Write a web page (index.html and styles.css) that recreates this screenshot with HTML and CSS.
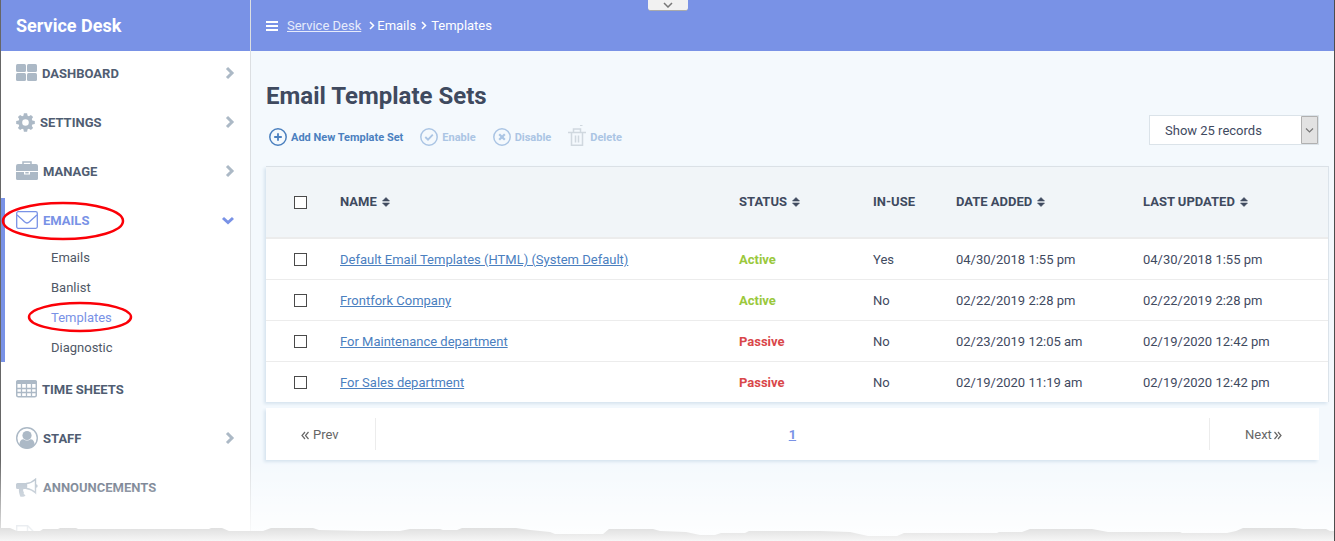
FILE: index.html
```html
<!DOCTYPE html>
<html lang="en">
<head>
<meta charset="utf-8">
<title>Service Desk - Email Template Sets</title>
<link rel="stylesheet" href="styles.css">
</head>
<body>
<svg class="defs" width="0" height="0" aria-hidden="true">
  <symbol id="chev" viewBox="0 0 10 14"><path d="M2 2l5 5-5 5" fill="none" stroke="currentColor" stroke-width="3"/></symbol>
  <symbol id="sort" viewBox="0 0 8 10"><path d="M4 .5l3.500 3.500h-7zM4 9.500l3.500-3.500h-7z" fill="currentColor" stroke="currentColor" stroke-width=".6" stroke-linejoin="round"/></symbol>
  <symbol id="crumb" viewBox="0 0 6 9"><path d="M1 1l3.5 3.5L1 8" fill="none" stroke="currentColor" stroke-width="1.5"/></symbol>
</svg>
<div class="app">
  <aside class="sidebar">
    <div class="brand">Service Desk</div>
    <nav class="menu" aria-label="Main">
      <a class="item" href="#"><svg width="21" height="18" viewBox="0 0 21 18"><g fill="currentColor"><rect width="10" height="8" rx="1.5"/><rect x="11" width="10" height="8" rx="1.5"/><rect y="9" width="10" height="8" rx="1.5"/><rect x="11" y="9" width="10" height="8" rx="1.5"/></g></svg><span>DASHBOARD</span><svg class="chev" width="10" height="14"><use href="#chev"/></svg></a>
      <a class="item" href="#"><svg width="19" height="19" viewBox="0 0 19 19"><path fill="currentColor" fill-rule="evenodd" d="M7.9.3h3.2l.5 2.4 1.3.5 2-1.3 2.2 2.2-1.3 2 .5 1.3 2.5.5v3.2l-2.5.5-.5 1.3 1.3 2-2.2 2.200-2-1.300-1.300.500-.500 2.500H7.900l-.500-2.500-1.300-.500-2 1.300-2.200-2.200 1.300-2-.500-1.300L.2 11.100V7.900l2.500-.500.500-1.300-1.300-2 2.200-2.200 2 1.300 1.300-.500zM9.500 6.200a3.300 3.300 0 1 0 0 6.600 3.300 3.300 0 0 0 0-6.600z"/></svg><span>SETTINGS</span><svg class="chev" width="10" height="14"><use href="#chev"/></svg></a>
      <a class="item" href="#"><svg width="22" height="20" viewBox="0 0 22 20"><path d="M7 4V1h8v3" fill="none" stroke="currentColor" stroke-width="1.500"/><path fill="currentColor" d="M2 3h18a2 2 0 0 1 2 2v5H0V5a2 2 0 0 1 2-2zM0 11h8v2.500h6V11h8v6.500a1.500 1.500 0 0 1-1.500 1.500h-19A1.500 1.500 0 0 1 0 17.500zM9.300 11h3.400v1.500H9.300z"/></svg><span>MANAGE</span><svg class="chev" width="10" height="14"><use href="#chev"/></svg></a>
      <div class="group">
        <a class="item" href="#"><svg width="22" height="18" viewBox="0 0 22 18"><g fill="none" stroke="currentColor" stroke-width="1.300"><rect x=".7" y=".7" width="20.600" height="16.600" rx="1.500"/><path d="M1 4c3 2.600 5 4 7.500 6.800C10 12.200 12 12.200 13.500 10.800 16 8 18 6.600 21 4"/></g></svg><span>EMAILS</span><svg class="chev" width="14" height="10" viewBox="0 0 14 10"><path d="M2 3l5 4.500L12 3" fill="none" stroke="currentColor" stroke-width="3"/></svg></a>
        <a class="sub" href="#">Emails</a>
        <a class="sub" href="#">Banlist</a>
        <a class="sub current" href="#">Templates</a>
        <a class="sub" href="#">Diagnostic</a>
        <svg class="ring ring-menu" width="124" height="40" viewBox="0 0 124 40"><ellipse cx="62" cy="20" rx="60" ry="18" fill="none" stroke="#fb0007" stroke-width="2.500"/></svg>
        <svg class="ring ring-sub" width="106" height="32" viewBox="0 0 106 32"><ellipse cx="53" cy="16" rx="51" ry="14" fill="none" stroke="#fb0007" stroke-width="2.500"/></svg>
      </div>
      <a class="item" href="#"><svg width="21" height="18" viewBox="0 0 21 18"><rect x=".7" y=".7" width="19.600" height="16" rx="1.500" fill="none" stroke="currentColor" stroke-width="1.500"/><path d="M1 1h19v3H1z" fill="currentColor"/><path d="M1 8.500h19M1 12.500h19M5.500 4v13M10.500 4v13M15.500 4v13" fill="none" stroke="currentColor" stroke-width="1.300"/></svg><span>TIME SHEETS</span></a>
      <a class="item" href="#"><svg width="22" height="22" viewBox="0 0 22 22"><circle cx="11" cy="11" r="10.300" fill="none" stroke="currentColor" stroke-width="1.400"/><circle cx="11" cy="8.500" r="4.600" fill="currentColor"/><path d="M3.500 17.500c0-3.200 1.500-5.200 4-5.200 2 1.600 5 1.600 7 0 2.500 0 4 2 4 5.200-2 2.500-4.500 4-7.500 4s-5.500-1.500-7.500-4z" fill="currentColor"/></svg><span>STAFF</span><svg class="chev" width="10" height="14"><use href="#chev"/></svg></a>
      <a class="item" href="#"><svg width="22" height="19" viewBox="0 0 22 19"><path d="M19.500 1.200v13.600C16.500 12 13 10.800 10.500 10.500v-5c2.500-.300 6-1.500 9-4.300z" fill="none" stroke="currentColor" stroke-width="1.400"/><path d="M1.500 5H11v6H7.500c-1 1.500 0 2.500.500 3.500-.800.800 0 1.800 1.500 2.800-1 1.700-4 1.900-5.300 1.100C3.600 16 2.500 14 3 11H1.500A1.500 1.500 0 0 1 0 9.500v-3A1.500 1.500 0 0 1 1.500 5zM20 6.300a1.700 1.700 0 0 1 0 3.400z" fill="currentColor"/></svg><span>ANNOUNCEMENTS</span></a>
      <a class="item" href="#" aria-label="Reports"><svg width="20" height="22" viewBox="0 0 20 22"><path d="M.7.700h11l6 6v14.600H.700zM11.500 1v6H18" fill="none" stroke="currentColor" stroke-width="1.400"/></svg></a>
    </nav>
  </aside>
  <main class="main">
    <header class="topbar">
      <svg width="12" height="10" viewBox="0 0 12 10"><path d="M0 0h12v2H0zM0 4h12v2H0zM0 8h12v2H0z" fill="currentColor"/></svg>
      <a href="#">Service Desk</a>
      <svg class="sep first" width="6" height="9"><use href="#crumb"/></svg><span>Emails</span>
      <svg class="sep" width="6" height="9"><use href="#crumb"/></svg><span>Templates</span>
    </header>
    <section class="content">
      <h1>Email Template Sets</h1>
      <div class="tools">
        <div class="actions">
          <button type="button" class="act"><svg width="18" height="18" viewBox="0 0 18 18"><circle cx="9" cy="9" r="8.200"/><path d="M9 5.200v7.600M5.200 9h7.600" stroke-width="1.800"/></svg><span>Add New Template Set</span></button>
          <button type="button" class="act off"><svg width="18" height="18" viewBox="0 0 18 18"><circle cx="9" cy="9" r="8.200"/><path d="M5.300 9l2.700 2.700 4.800-5" stroke-width="1.800"/></svg><span>Enable</span></button>
          <button type="button" class="act off"><svg width="18" height="18" viewBox="0 0 18 18"><circle cx="9" cy="9" r="8.200"/><path d="M6.200 6.200l5.600 5.600M11.800 6.200l-5.600 5.600" stroke-width="2.200"/></svg><span>Disable</span></button>
          <button type="button" class="act off"><svg class="bin" width="18" height="22" viewBox="0 0 18 22"><path d="M12 .500h2.500" stroke-width="1"/><path d="M0 7.500h18M5.500 7V4h7v3M3.500 7.500v12.700h11V7.500M7.500 10.500v7M10.500 10.500v7"/></svg><span>Delete</span></button>
        </div>
        <label class="records"><select aria-label="Records per page"><option>Show 25 records</option></select><svg width="17" height="28" viewBox="0 0 17 28"><path d="M.5.500h16v27H.500z" fill="#e2e2e2" stroke="#b0b0b0"/><path d="M5 12.500l3.500 3.500 3.500-3.500" fill="none" stroke="#777" stroke-width="1.200"/></svg></label>
      </div>
      <table class="grid">
        <colgroup><col class="c-check"><col><col class="c-status"><col class="c-use"><col class="c-added"><col class="c-updated"></colgroup>
        <thead><tr>
          <th class="check"><input type="checkbox" aria-label="Select all"></th>
          <th>NAME<svg class="sort" width="8" height="10"><use href="#sort"/></svg></th>
          <th>STATUS<svg class="sort" width="8" height="10"><use href="#sort"/></svg></th>
          <th>IN-USE</th>
          <th>DATE ADDED<svg class="sort" width="8" height="10"><use href="#sort"/></svg></th>
          <th>LAST UPDATED<svg class="sort" width="8" height="10"><use href="#sort"/></svg></th>
        </tr></thead>
        <tbody>
          <tr><td class="check"><input type="checkbox" aria-label="Select Default Email Templates"></td><td><a href="#">Default Email Templates (HTML) (System Default)</a></td><td class="active">Active</td><td>Yes</td><td>04/30/2018 1:55 pm</td><td>04/30/2018 1:55 pm</td></tr>
          <tr><td class="check"><input type="checkbox" aria-label="Select Frontfork Company"></td><td><a href="#">Frontfork Company</a></td><td class="active">Active</td><td>No</td><td>02/22/2019 2:28 pm</td><td>02/22/2019 2:28 pm</td></tr>
          <tr><td class="check"><input type="checkbox" aria-label="Select For Maintenance department"></td><td><a href="#">For Maintenance department</a></td><td class="passive">Passive</td><td>No</td><td>02/23/2019 12:05 am</td><td>02/19/2020 12:42 pm</td></tr>
          <tr><td class="check"><input type="checkbox" aria-label="Select For Sales department"></td><td><a href="#">For Sales department</a></td><td class="passive">Passive</td><td>No</td><td>02/19/2020 11:19 am</td><td>02/19/2020 12:42 pm</td></tr>
        </tbody>
      </table>
      <nav class="pager" aria-label="Pages">
        <a class="step" href="#"><svg width="8" height="9" viewBox="0 0 8 9"><path d="M4 1L1 4.500 4 8M7.500 1l-3 3.500 3 3.500" fill="none" stroke="currentColor" stroke-width="1.200"/></svg>Prev</a>
        <a class="page" href="#">1</a>
        <a class="step next" href="#">Next<svg width="8" height="9" viewBox="0 0 8 9"><path d="M.5 1l3 3.500-3 3.500M4 1l3 3.500L4 8" fill="none" stroke="currentColor" stroke-width="1.200"/></svg></a>
      </nav>
    </section>
  </main>
  <button type="button" class="pull" aria-label="Show panel"><svg width="10" height="6" viewBox="0 0 10 6"><path d="M1 1l4 4 4-4" fill="none" stroke="#777" stroke-width="1.500"/></svg></button>
  <div class="fade"></div>
  <svg class="tear" height="21" viewBox="0 0 1335 21" preserveAspectRatio="none">
    <defs><linearGradient id="shade" x1="0" y1="7" x2="0" y2="21" gradientUnits="userSpaceOnUse"><stop offset="0" stop-color="#dedede"/><stop offset="1" stop-color="#f6f6f6"/></linearGradient></defs>
    <path fill="url(#shade)" d="M0 8H10L17 11H40L43 9H58L60 8H76L78 9H209L211 8H222L229 11H263L271 8H313L319 10L363 11H400L410 9H440L443 10H457L462 8H516L530 10L550 12L555 14H603L609 9H653L660 11L686 12L700 15H715L721 13H745L749 11H820L850 12L868 16H897L904 13H997L999 12H1022L1030 9H1092L1108 12H1180L1182 13H1227L1236 11L1243 8H1295L1303 9H1326L1330 11H1335V21H0Z"/>
  </svg>
</div>
</body>
</html>
```
FILE: styles.css
```css
* { box-sizing: border-box; }
body { margin: 0; font: 13px/20px Roboto, "Liberation Sans", sans-serif; color: #3f4a5f; }
a { color: inherit; text-decoration: none; }
button, select { font: inherit; color: inherit; }
.defs { position: absolute; }
.app {
  position: relative;
  display: grid;
  grid-template-columns: 251px 1fr;
  height: 100vh;
  overflow: hidden;
  background: #f4f9fd;
  border-right: 1px solid #4d4d4d;
}
.sidebar { background: #fff; border-left: 1px solid #666; border-right: 1px solid #dcdfe2; }
.brand {
  height: 51px;
  padding-left: 15px;
  background: #7992e6;
  color: #fff;
  font-size: 18px;
  font-weight: 700;
  line-height: 51px;
}
.menu { display: flex; flex-direction: column; gap: 5px; }
.item {
  display: flex;
  align-items: center;
  gap: 5px;
  height: 44px;
  padding: 0 15px;
  color: #acb9c6;
  font-weight: 700;
}
.item span { padding-top: 2px; color: #505d72; }
.chev { margin-left: auto; }
.group { position: relative; border-left: 4px solid #7992e6; }
.group .item { padding-left: 11px; color: #7992e6; }
.group .item span { color: inherit; }
.sub { display: block; padding: 2px 0 0 46px; line-height: 28px; color: #4f5866; }
.sub.current { color: #7992e6; }
.ring { position: absolute; pointer-events: none; }
.ring-menu { left: -4px; top: 3px; }
.ring-sub { left: 22px; top: 103px; }
.topbar {
  display: flex;
  align-items: center;
  height: 51px;
  padding-left: 15px;
  background: #7992e6;
  color: #fff;
}
.topbar a { margin-left: 9px; color: #e6ebfb; text-decoration: underline; }
.sep { margin: 0 4px 0 5px; }
.sep.first { margin: 0 2px 0 8px; }
.content { padding: 30px 5px 0 15px; }
h1 { margin: 0; font-size: 24px; font-weight: 700; line-height: 30px; }
.tools { display: flex; justify-content: space-between; align-items: flex-start; padding: 4px 10px 21px 3px; }
.actions { display: flex; gap: 17px; padding-top: 10px; height: 26px; }
.act {
  display: flex;
  align-items: center;
  gap: 4px;
  height: 24px;
  padding: 0;
  border: 0;
  background: none;
  color: #4b80bf;
  font-size: 11px;
  font-weight: 700;
}
.act span { padding-top: 2px; }
.act svg { fill: none; stroke: currentColor; stroke-width: 1.5; }
.act.off { color: #abc5e4; }
.act .bin { color: #d0d8df; margin-bottom: 3px; }
.records { position: relative; display: flex; }
.records select {
  appearance: none;
  width: 170px;
  height: 30px;
  padding: 2px 15px 0;
  border: 1px solid #dbe3e9;
  border-radius: 0;
  background: #fff;
}
.records svg { position: absolute; right: 1px; top: 1px; pointer-events: none; }
.grid {
  width: 100%;
  table-layout: fixed;
  border-collapse: separate;
  border-spacing: 0;
  background: #fff;
  border-top: 1px solid #dbe1e6;
  border-right: 1px solid #dbe3ea;
  box-shadow: -2px 2px 3px #d7e4ef;
}
.c-check { width: 74px; }
.c-status { width: 134px; }
.c-use { width: 83px; }
.c-added { width: 187px; }
.c-updated { width: 185px; }
.grid th, .grid td { padding: 0; text-align: left; border-bottom: 1px solid #ececec; }
.grid th { height: 72px; background: #f1f5f8; border-bottom-width: 2px; font-weight: 700; }
.grid td { height: 41px; padding-top: 2px; }
.grid tr:last-child td { height: 40px; border-bottom: 0; }
.grid .check { padding: 0 0 0 28px; }
.grid td a { color: #4b80bf; text-decoration: underline; }
.grid input {
  display: block;
  appearance: none;
  width: 13px;
  height: 13px;
  margin: 0;
  border: 1px solid #4a4a4a;
  background: #fff;
}
.grid thead .check { border-bottom-color: #ececec; }
.sort { margin-left: 5px; vertical-align: -1px; }
.grid .active { color: #9ac83c; font-weight: 700; }
.grid .passive { color: #d9474a; font-weight: 700; }
.pager {
  display: flex;
  justify-content: space-between;
  align-items: center;
  height: 52px;
  margin: 6px 10px 0 0;
  background: #fff;
  box-shadow: -2px 2px 3px #d7e4ef;
}
.step {
  display: flex;
  align-items: center;
  gap: 4px;
  width: 110px;
  height: 32px;
  padding: 2px 0 0 35px;
  border-right: 1px solid #ececec;
  color: #666;
}
.step.next { gap: 2px; border-right: 0; border-left: 1px solid #ececec; }
.page { padding-top: 2px; color: #7992e6; font-weight: 700; text-decoration: underline; }
.pull {
  position: absolute;
  left: calc(50% - 19px);
  top: 0;
  display: flex;
  justify-content: center;
  align-items: center;
  width: 40px;
  height: 11px;
  padding: 0;
  border: 0;
  border-bottom: 1px solid #aaa;
  border-radius: 0 0 3px 3px;
  background: #f1f1f1;
}
.fade {
  position: absolute;
  inset: auto -1px 0 0;
  height: 81px;
  background: linear-gradient(rgba(255, 255, 255, 0), rgba(255, 255, 255, 0.8) 70px);
  pointer-events: none;
}
.tear { position: absolute; left: 0; bottom: 0; width: calc(100% + 1px); pointer-events: none; }
```
